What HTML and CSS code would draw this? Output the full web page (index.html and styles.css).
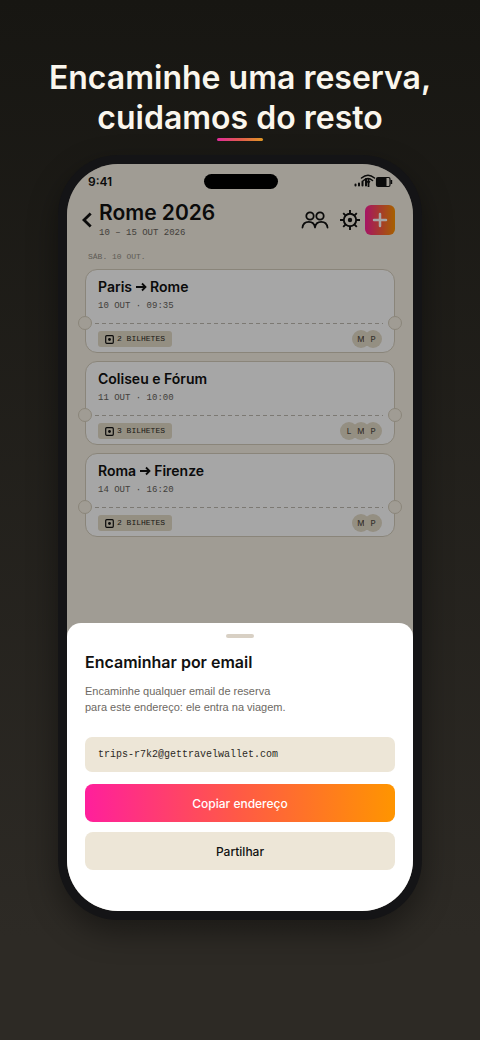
FILE: index.html
```html
<!DOCTYPE html>
<html lang="pt">
<head>
<meta charset="utf-8">
<meta name="viewport" content="width=device-width, initial-scale=1">
<title>Encaminhe uma reserva</title>
<link rel="stylesheet" href="styles.css">
</head>
<body>
<main class="page">
  <h1 class="headline">Encaminhe uma reserva,<br>cuidamos do resto</h1>
  <div class="rule"></div>
  <div class="phone">
    <div class="screen">
      <div class="app">
        <div class="status">
          <span class="time">9:41</span>
          <span class="island"></span>
          <svg class="status-icons" width="39" height="14" viewBox="0 0 39 14" fill="none" stroke="#111" aria-hidden="true">
            <path d="M1.500 10.500v1M5 9.500v2M8.500 7.500v4M12 5v6.500" stroke-width="2" stroke-linecap="round"/>
            <path d="M7.500 4q6.500-5.500 13 0M9.500 6.500q4.500-4 9 0" stroke-width="1.500" stroke-linecap="round"/>
            <path d="M14.500 5v8" stroke-width="1.800"/>
            <path d="M12.500 7.500q2-1.500 4 0l-2 2.500z" fill="#111" stroke="none"/>
            <rect x="22.500" y="3.500" width="13.500" height="9" rx="1.500" stroke-width="1.200"/>
            <path d="M23 4h9.500v8h-9.500zM36.500 6h1.700v4h-1.700z" fill="#111" stroke="none"/>
          </svg>
        </div>
        <header class="trip">
          <button class="icon-btn back" aria-label="Voltar">
            <svg width="10" height="16" viewBox="0 0 10 16" fill="none" stroke="#111" stroke-width="2.800"><path d="M8.700 1.500L2 8l6.700 6.500"/></svg>
          </button>
          <div class="trip-text">
            <h2 class="trip-title">Rome 2026</h2>
            <p class="trip-dates">10 – 15 OUT 2026</p>
          </div>
          <div class="actions">
            <button class="icon-btn" aria-label="Pessoas">
              <svg width="28" height="18" viewBox="0 0 28 18" fill="none" stroke="#111" stroke-width="1.800"><circle cx="9" cy="5" r="3.700"/><circle cx="19" cy="5" r="3.700"/><path d="M1.500 16.500c1-7.500 11.500-7.500 12.500 0c1-7.500 11.500-7.500 12.500 0" stroke-linecap="round" stroke-linejoin="round"/></svg>
            </button>
            <button class="icon-btn gear" aria-label="Definições">
              <svg width="20" height="20" viewBox="0 0 20 20" fill="none" stroke="#111" stroke-width="1.900"><circle cx="10" cy="10" r="6.200"/><circle cx="10" cy="10" r="2.200" fill="#111" stroke="none"/><path d="M10 0v4M10 16v4M0 10h4M16 10h4M3.200 3.200l2.500 2.500M14.300 14.300l2.500 2.500M3.200 16.800l2.500-2.500M14.300 5.700l2.500-2.500"/></svg>
            </button>
            <button class="add" aria-label="Adicionar">
              <svg width="16" height="16" viewBox="0 0 16 16" stroke="#fff" stroke-width="2.500" stroke-linecap="round"><path d="M8 2v12M2 8h12"/></svg>
            </button>
          </div>
        </header>
        <p class="day">SÁB. 10 OUT.</p>
        <div class="cards">
          <article class="card">
            <h3 class="card-title">Paris <svg class="arrow" width="11" height="10" viewBox="0 0 11 10"><path d="M0 5h9.500M6 1.500l3.500 3.500-3.500 3.500"/></svg> Rome</h3>
            <p class="card-meta">10 OUT · 09:35</p>
            <div class="tear"></div>
            <div class="card-foot">
              <span class="chip"><svg class="ticket" width="9" height="9" viewBox="0 0 9 9"><rect x=".7" y=".7" width="7.600" height="7.600" rx="1"/><circle cx="4.500" cy="4.500" r="1.400"/></svg>2 BILHETES</span>
              <span class="people"><span class="avatar">M</span><span class="avatar">P</span></span>
            </div>
          </article>
          <article class="card">
            <h3 class="card-title">Coliseu e Fórum</h3>
            <p class="card-meta">11 OUT · 10:00</p>
            <div class="tear"></div>
            <div class="card-foot">
              <span class="chip"><svg class="ticket" width="9" height="9" viewBox="0 0 9 9"><rect x=".7" y=".7" width="7.600" height="7.600" rx="1"/><circle cx="4.500" cy="4.500" r="1.400"/></svg>3 BILHETES</span>
              <span class="people"><span class="avatar">L</span><span class="avatar">M</span><span class="avatar">P</span></span>
            </div>
          </article>
          <article class="card">
            <h3 class="card-title">Roma <svg class="arrow" width="11" height="10" viewBox="0 0 11 10"><path d="M0 5h9.500M6 1.500l3.500 3.500-3.500 3.500"/></svg> Firenze</h3>
            <p class="card-meta">14 OUT · 16:20</p>
            <div class="tear"></div>
            <div class="card-foot">
              <span class="chip"><svg class="ticket" width="9" height="9" viewBox="0 0 9 9"><rect x=".7" y=".7" width="7.600" height="7.600" rx="1"/><circle cx="4.500" cy="4.500" r="1.400"/></svg>2 BILHETES</span>
              <span class="people"><span class="avatar">M</span><span class="avatar">P</span></span>
            </div>
          </article>
        </div>
      </div>
      <div class="overlay">
        <section class="sheet">
          <div class="handle"></div>
          <h2 class="sheet-title">Encaminhar por email</h2>
          <p class="sheet-text">Encaminhe qualquer email de reserva<br>para este endereço: ele entra na viagem.</p>
          <input class="address" type="text" aria-label="Endereço de email" value="trips-r7k2@gettravelwallet.com" readonly>
          <button class="btn primary">Copiar endereço</button>
          <button class="btn">Partilhar</button>
        </section>
      </div>
    </div>
  </div>
</main>
</body>
</html>
```

FILE: styles.css
```css
*, *::before, *::after { box-sizing: border-box; margin: 0; }

body {
  background: #2d2a25;
  font-family: Inter, "Liberation Sans", sans-serif;
  color: #111;
}

button, input { border: 0; padding: 0; font: inherit; color: inherit; }

.page {
  min-height: 100vh;
  padding: 58px 0 119px;
  display: flex;
  flex-direction: column;
  align-items: center;
  background: linear-gradient(#171612, #2d2a25 90%);
}

.headline {
  font-size: 32px;
  line-height: 40px;
  font-weight: 600;
  text-align: center;
  color: #faf6ed;
}

.rule {
  width: 46px;
  height: 3px;
  margin: 0 0 14px;
  border-radius: 2px;
  background: linear-gradient(90deg, #e22c9c, #e35b50, #e29a25);
}

.phone {
  width: calc(100% - 116px);
  max-width: 420px;
  padding: 9px;
  border-radius: 60px;
  background: #141416;
  box-shadow: 0 12px 30px rgba(0, 0, 0, .4);
}

.screen {
  position: relative;
  border-radius: 51px;
  overflow: hidden;
  background: #f6f0e3;
}

.app { padding: 8px 18px 374px; }

.status {
  display: grid;
  grid-template-columns: 1fr auto 1fr;
  align-items: center;
  height: 18px;
  padding: 0 2px 0 3px;
}

.time { font-size: 12px; font-weight: 600; }
.island { width: 74px; height: 15px; border-radius: 8px; background: #000; }
.status-icons { justify-self: end; }

.trip { display: flex; align-items: center; margin-top: 10px; }
.icon-btn { display: flex; background: none; }
.back { margin: 0 7px 0 -3px; }
.trip-text { flex: 1; }
.trip-title { font-size: 21px; line-height: 26px; font-weight: 600; }
.trip-dates {
  margin-top: 1px;
  font: 9px/12px "Liberation Mono", monospace;
  color: #66625b;
}
.actions { display: flex; align-items: center; }
.gear { margin: 0 5px 0 11px; }
.add {
  display: grid;
  place-items: center;
  width: 30px;
  height: 30px;
  border-radius: 6px;
  background: linear-gradient(90deg, #ff1f9c, #ff5a45, #ff9500);
}

.day {
  margin: 12px 0 6px 3px;
  font: 8px/12px "Liberation Mono", monospace;
  color: #928d83;
}

.cards { display: grid; gap: 8px; }

.card {
  padding: 8px 12px 4px;
  border: 1px solid #d5cdbc;
  border-radius: 12px;
  background: #fff;
}
.card-title { font-size: 14px; line-height: 18px; font-weight: 600; }
.arrow { fill: none; stroke: #111; stroke-width: 1.8; }
.card-meta {
  margin-top: 4px;
  font: 9px/12px "Liberation Mono", monospace;
  color: #66625b;
}

.tear {
  position: relative;
  height: 1px;
  margin: 11px -1px 6px -3px;
  background: repeating-linear-gradient(90deg, #bfbab1 0 4px, transparent 4px 7px);
}
.tear::before, .tear::after {
  content: "";
  position: absolute;
  top: -7px;
  width: 14px;
  height: 14px;
  border: 1px solid #d5cdbc;
  border-radius: 50%;
  background: #f6f0e3;
}
.tear::before { left: -17px; }
.tear::after { right: -19px; }

.card-foot { display: flex; justify-content: space-between; align-items: center; }
.chip {
  display: flex;
  align-items: center;
  gap: 3px;
  height: 16px;
  padding: 0 7px;
  border-radius: 3px;
  background: #e4dcc8;
  font: 8px/16px "Liberation Mono", monospace;
  color: #2c2924;
}
.ticket { fill: none; stroke: #111; stroke-width: 1.2; }
.ticket circle { fill: #111; stroke: none; }
.people { display: flex; }
.avatar {
  width: 18px;
  height: 18px;
  border-radius: 50%;
  background: #e4dcc8;
  font-size: 8px;
  line-height: 18px;
  font-weight: 500;
  text-align: center;
  color: #55504a;
}
.avatar + .avatar { margin-left: -6px; }

.overlay {
  position: absolute;
  inset: 0;
  display: flex;
  align-items: flex-end;
  background: rgba(0, 0, 0, .35);
}
.sheet {
  flex: 1;
  display: flex;
  flex-direction: column;
  padding: 11px 18px 41px;
  border-radius: 14px 14px 0 0;
  background: #fff;
}
.handle {
  align-self: center;
  width: 28px;
  height: 4px;
  border-radius: 2px;
  background: #d8d0c4;
}
.sheet-title { margin-top: 13px; font-size: 16px; line-height: 22px; font-weight: 600; }
.sheet-text {
  margin: 10px 0 22px;
  font: 11px/16px "Liberation Sans", sans-serif;
  color: #6d6963;
}
.address {
  width: 100%;
  height: 35px;
  padding: 0 13px;
  border-radius: 7px;
  background: #ede6d7;
  font: 10px "Liberation Mono", monospace;
  color: #2c2924;
}
.btn {
  height: 38px;
  margin-top: 10px;
  border-radius: 8px;
  background: #ede6d7;
  font-size: 12px;
  font-weight: 500;
}
.primary {
  margin-top: 12px;
  background: linear-gradient(90deg, #ff1f9c, #ff5a45, #ff9500);
  color: #fff;
}
```
